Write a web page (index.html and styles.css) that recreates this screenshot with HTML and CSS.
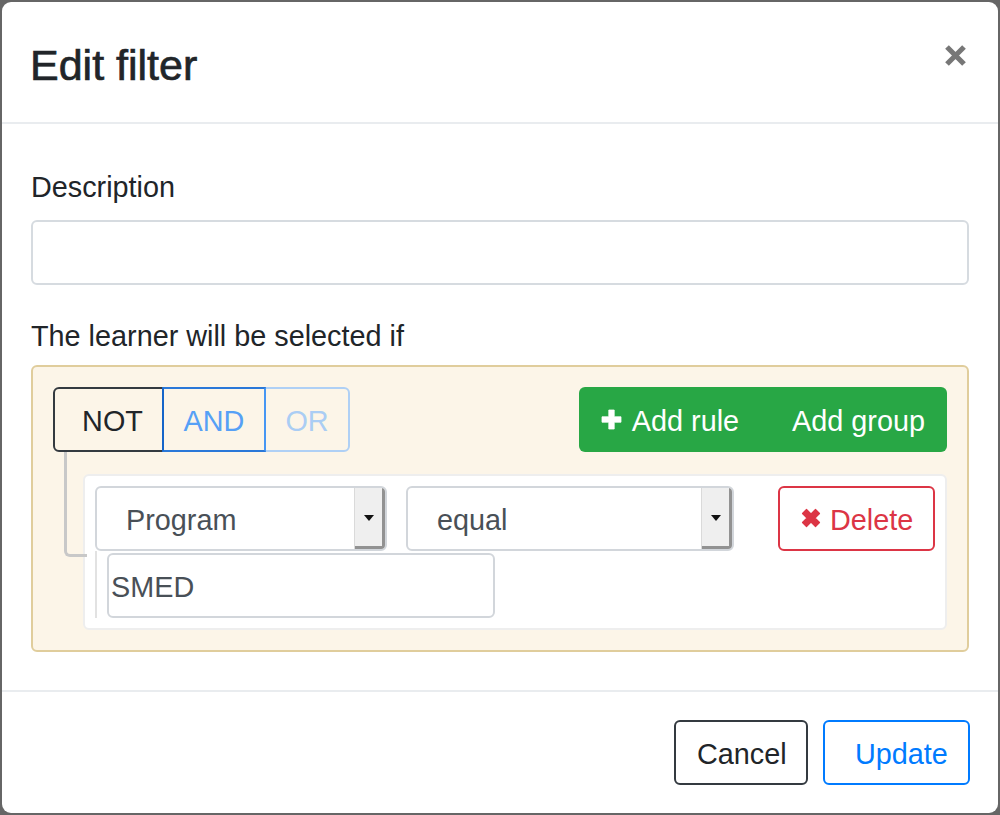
FILE: index.html
```html
<!DOCTYPE html>
<html>
<head>
<meta charset="utf-8">
<link rel="stylesheet" href="styles.css">
</head>
<body>
<div class="modal">
  <div class="modal-header">
    <h4 class="modal-title">Edit filter</h4>
    <svg class="close" width="21" height="21" viewBox="0 0 21 21"><path d="M2 2 L19 19 M19 2 L2 19" stroke="#777" stroke-width="5.2" fill="none"/></svg>
  </div>
  <div class="modal-body">
    <div class="form-group">
      <label class="label">Description</label>
      <div class="input"></div>
    </div>
    <label class="label label-tight">The learner will be selected if</label>
    <div class="group">
      <div class="group-header">
        <div class="btn-group">
          <div class="cond cond-not">NOT</div>
          <div class="cond cond-and">AND</div>
          <div class="cond cond-or">OR</div>
        </div>
        <div class="btn-group green">
          <div class="gbtn gbtn-rule"><svg class="plus" width="21" height="21" viewBox="0 0 21 21"><path d="M7.8 1 h5.4 v6.8 h6.8 v5.4 h-6.8 v6.8 h-5.4 v-6.8 h-6.8 v-5.4 h6.8 z" fill="#fff" stroke="#fff" stroke-width="0.8" stroke-linejoin="round"/></svg>Add rule</div>
          <div class="gbtn gbtn-group">Add group</div>
        </div>
      </div>
      <div class="rule">
        <div class="rule-row">
          <div class="select select-field"><span class="select-text">Program</span><span class="select-arrow"><i class="tri"></i></span></div>
          <div class="select select-op"><span class="select-text">equal</span><span class="select-arrow"><i class="tri"></i></span></div>
          <div class="btn-delete"><svg class="xicon" width="20" height="20" viewBox="0 0 20 20"><path d="M1.5 5.5 L5.5 1.5 L10 6 L14.5 1.5 L18.5 5.5 L14 10 L18.5 14.5 L14.5 18.5 L10 14 L5.5 18.5 L1.5 14.5 L6 10 Z" fill="#dc3545" stroke="#dc3545" stroke-width="1.2" stroke-linejoin="round"/></svg>Delete</div>
        </div>
        <div class="rule-value">
          <div class="value-input">SMED</div>
        </div>
      </div>
    </div>
  </div>
  <div class="modal-footer">
    <div class="btn btn-cancel">Cancel</div>
    <div class="btn btn-update">Update</div>
  </div>
</div>
</body>
</html>
```
FILE: styles.css
```css
* { box-sizing: border-box; }
html, body { margin: 0; }
body {
  background: #666;
  padding: 2px;
  height: 815px;
  font-family: "Liberation Sans", Arial, sans-serif;
  color: #212529;
  font-size: 28.8px;
}
.modal {
  width: 996px;
  height: 811px;
  background: #fff;
  border-radius: 9px;
  display: flex;
  flex-direction: column;
  overflow: hidden;
}
.modal-header {
  height: 122px;
  flex: none;
  border-bottom: 2px solid #e9ecef;
  display: flex;
  justify-content: space-between;
  align-items: flex-start;
  padding: 42px 32px 0 28px;
}
.modal-title {
  margin: 0;
  font-size: 43px;
  line-height: 43px;
  font-weight: 400;
  color: #212529;
  -webkit-text-stroke: 0.7px #212529;
}
.close { margin-top: 1px; display: block; }
.modal-body {
  flex: 1;
  padding: 42.4px 29px 37px;
}
.label {
  display: block;
  line-height: 43.2px;
  margin-bottom: 10.4px;
}
.label-tight { margin-bottom: 6.4px; }
.form-group { margin-bottom: 30.4px; }
.input {
  height: 65px;
  border: 2px solid #d6dbe0;
  border-radius: 6px;
}
.group {
  border: 2px solid #e0cd9c;
  background: #fcf5e8;
  border-radius: 6px;
  padding: 20px;
}
.group-header {
  display: flex;
  justify-content: space-between;
  height: 65px;
}
.btn-group { display: flex; }
.cond {
  height: 65px;
  display: flex;
  align-items: center;
  justify-content: center;
  border: 2px solid;
  position: relative;
  padding-top: 4px;
}
.cond-not {
  width: 111px;
  padding-left: 8px;
  border-color: #343a40;
  color: #212529;
  border-radius: 6px 0 0 6px;
}
.cond-and {
  width: 104px;
  margin-left: -2px;
  border-color: #2a78d8;
  border-left-color: #1565c9;
  border-right-color: #4696f3;
  color: #56a0f6;
  z-index: 1;
}
.cond-or {
  width: 86px;
  margin-left: -2px;
  border-color: #afd0f5;
  color: #aacdf4;
  border-radius: 0 6px 6px 0;
}
.green {
  background: #28a745;
  border-radius: 6px;
  height: 65px;
  color: #fff;
}
.gbtn {
  display: flex;
  align-items: center;
  height: 65px;
  padding-top: 4px;
}
.gbtn-rule { padding-left: 22px; padding-right: 22px; }
.gbtn-group { padding-left: 31px; padding-right: 22px; }
.plus { margin-right: 10px; display: block; margin-top: -3px; }
.rule {
  margin: 22px 0 0 30px;
  background: #fff;
  border: 2px solid #eeeeee;
  border-radius: 6px;
  padding: 10px;
  position: relative;
}
.rule::before {
  content: "";
  position: absolute;
  left: -21px;
  top: -24px;
  width: 20px;
  height: 102px;
  border-left: 3px solid #c8c8c8;
  border-bottom: 3px solid #c8c8c8;
  border-bottom-left-radius: 6px;
}
.rule-row {
  display: flex;
  align-items: flex-start;
}
.select {
  height: 65px;
  display: flex;
  border: 2px solid #d2d6db;
  border-radius: 6px;
  background: #fff;
  overflow: hidden;
  color: #495057;
}
.select-field { width: 292px; }
.select-op { width: 328px; margin-left: 19px; }
.select-text {
  flex: 1;
  display: flex;
  align-items: center;
  padding-left: 29px;
  padding-top: 5px;
}
.select-arrow {
  width: 31px;
  background: #efefef;
  border-left: 1px solid #dadada;
  box-shadow: inset -3px -3px 0 #929292;
  display: flex;
  align-items: center;
  justify-content: center;
  padding-right: 3px;
}
.tri {
  width: 0;
  height: 0;
  border-left: 5px solid transparent;
  border-right: 5px solid transparent;
  border-top: 6px solid #111;
}
.btn-delete {
  margin-left: auto;
  width: 157px;
  height: 65px;
  border: 2px solid #dc3545;
  border-radius: 6px;
  color: #dc3545;
  display: flex;
  align-items: center;
  padding: 4px 0 0 21px;
}
.xicon { display: block; margin-right: 9px; margin-top: -4px; }
.rule-value {
  border-left: 2px solid #e2e2e2;
  padding: 2px 0 0 10px;
}
.value-input {
  width: 388px;
  height: 65px;
  border: 2px solid #d2d6db;
  border-radius: 6px;
  display: flex;
  align-items: center;
  padding: 4px 0 0 2px;
  color: #495057;
}
.modal-footer {
  flex: none;
  border-top: 2px solid #e9ecef;
  padding: 28px 28px 28px;
  display: flex;
  justify-content: flex-end;
  gap: 15px;
}
.btn {
  height: 65px;
  display: flex;
  align-items: center;
  border: 2px solid;
  border-radius: 6px;
  padding-top: 4px;
}
.btn-cancel {
  width: 134px;
  padding-left: 21px;
  border-color: #343a40;
  color: #212529;
}
.btn-update {
  width: 147px;
  padding-left: 30px;
  border-color: #007bff;
  color: #007bff;
}
```
